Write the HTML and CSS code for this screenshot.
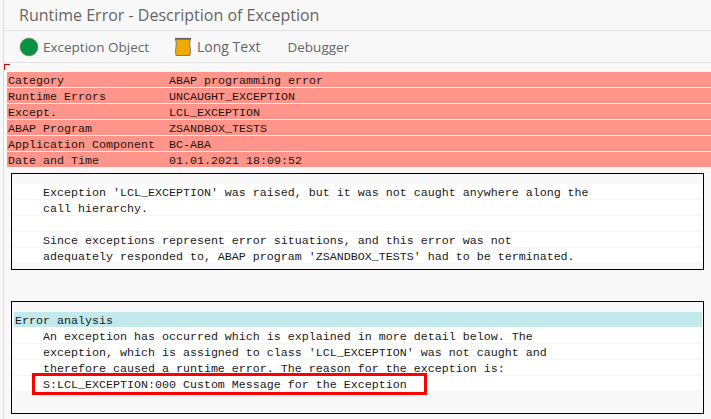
FILE: index.html
```html
<!DOCTYPE html>
<html lang="en">
<head>
<meta charset="utf-8">
<title>Runtime Error</title>
<link rel="stylesheet" href="styles.css">
</head>
<body>
<div class="page">
  <header class="title">Runtime Error - Description of Exception</header>
  <nav class="toolbar">
    <span class="tool">
      <svg class="ico" width="20" height="20" viewBox="0 0 20 20"><circle cx="10" cy="10" r="9" fill="#0a9148" stroke="#8a8a3a" stroke-width="0.6"/></svg>
      Exception Object
    </span>
    <span class="tool tool-long">
      <svg class="ico" width="18" height="20" viewBox="0 0 18 20"><path d="M1.5 2 L16.5 2 Q15 6 16 10 Q17 14 16 18.5 L2 18.5 Q1 14 2 10 Q2.8 6 1.5 2Z" fill="#f0ab00" stroke="#7a7c80" stroke-width="1"/><path d="M1 1.7 H17" stroke="#5f6063" stroke-width="1.6"/></svg>
      Long Text
    </span>
    <span class="tool tool-plain">Debugger</span>
  </nav>
  <main class="content">
    <span class="corner"></span>
    <section class="header-list">
      <div class="hrow"><span class="key">Category</span><span>ABAP programming error</span></div>
      <div class="hrow"><span class="key">Runtime Errors</span><span>UNCAUGHT_EXCEPTION</span></div>
      <div class="hrow"><span class="key">Except.</span><span>LCL_EXCEPTION</span></div>
      <div class="hrow"><span class="key">ABAP Program</span><span>ZSANDBOX_TESTS</span></div>
      <div class="hrow"><span class="key">Application Component</span><span>BC-ABA</span></div>
      <div class="hrow"><span class="key">Date and Time</span><span>01.01.2021 18:09:52</span></div>
    </section>
    <section class="box box-short">
      <div class="line">Exception 'LCL_EXCEPTION' was raised, but it was not caught anywhere along the</div>
      <div class="line">call hierarchy.</div>
      <div class="line"></div>
      <div class="line">Since exceptions represent error situations, and this error was not</div>
      <div class="line">adequately responded to, ABAP program 'ZSANDBOX_TESTS' had to be terminated.</div>
    </section>
    <section class="box box-analysis">
      <div class="heading">Error analysis</div>
      <div class="line">An exception has occurred which is explained in more detail below. The</div>
      <div class="line">exception, which is assigned to class 'LCL_EXCEPTION' was not caught and</div>
      <div class="line">therefore caused a runtime error. The reason for the exception is:</div>
      <div class="line">S:LCL_EXCEPTION:000 Custom Message for the Exception<span class="highlight"></span></div>
    </section>
  </main>
</div>
</body>
</html>
```

FILE: styles.css
```css
* { box-sizing: border-box; }
html, body { margin: 0; padding: 0; }
body {
  width: 711px;
  height: 419px;
  overflow: hidden;
  background: #f7f7f7;
  font-family: "Liberation Mono", monospace;
  color: #222;
}
.page {
  height: 419px;
  margin-left: 3px;
  background: #f8f8f8;
  border-left: 1px solid #dcdcdc;
}
.title {
  height: 31px;
  padding: 5px 0 0 15px;
  font: 16px/20px "Open Sans", sans-serif;
  color: #666;
  border-bottom: 1px solid #e2e2e2;
}
.toolbar {
  height: 32px;
  display: flex;
  align-items: center;
  padding: 0 0 0 15px;
  font: 13.5px/20px "Open Sans", sans-serif;
  color: #666;
  border-bottom: 1px solid #e2e2e2;
}
.tool { display: flex; align-items: center; gap: 4px; }
.ico { display: block; flex: none; }
.tool-long { margin-left: 25px; gap: 5px; font-size: 14px; }
.tool-plain { margin-left: 27px; }
.content {
  position: relative;
  padding: 9px 0 0 3px;
  font-size: 11.67px;
  line-height: 18px;
  white-space: nowrap;
}
.corner {
  position: absolute;
  left: 0;
  top: 1px;
  width: 6px;
  height: 6px;
  border-top: 1px solid #e00000;
  border-left: 1px solid #e00000;
}
.header-list { display: flex; flex-direction: column; }
.hrow {
  height: 16px;
  display: flex;
  background: #ff958a;
  border-bottom: 1px solid #fff0ee;
  padding-left: 1px;
  color: #1e1410;
}
.hrow:last-child { height: 15px; border-bottom: 0; }
.key { width: 161px; flex: none; }
.box {
  margin: 0 0 0 4px;
  width: 693px;
  border: 1px solid #000;
  padding: 10px 1px 0 2px;
}
.box-short { height: 97px; margin-top: 6px; }
.box-analysis { height: 113px; margin-top: 31px; }
.line {
  position: relative;
  height: 16px;
  padding-left: 29px;
  background: #fff;
  border-bottom: 1px solid #f5f5f5;
  color: #1a1a1a;
}
.heading {
  height: 16px;
  padding-left: 1px;
  background: #c2e9ec;
  border-bottom: 1px solid #fff;
  color: #1a1a1a;
}
.highlight {
  position: absolute;
  left: 18px;
  top: -3px;
  width: 395px;
  height: 22px;
  border: 3px solid #f00;
}
```
